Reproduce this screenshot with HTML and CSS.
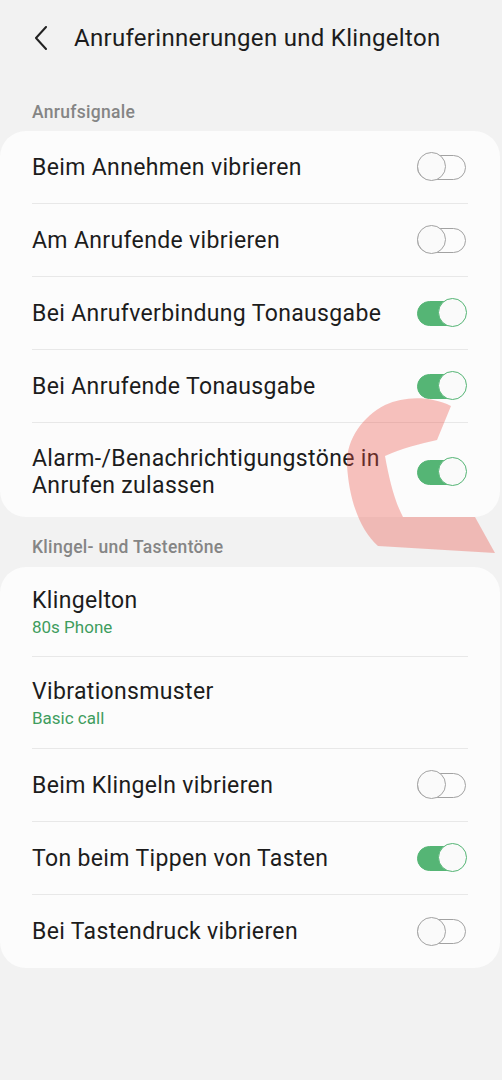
FILE: index.html
```html
<!DOCTYPE html>
<html lang="de">
<head>
    <meta charset="UTF-8">
    <meta name="viewport" content="width=device-width, initial-scale=1.0">
    <title>Anruferinnerungen und Klingelton</title>
    <link rel="stylesheet" href="styles.css">
</head>
<body>

    <div class="topbar">
        <svg class="back" width="14" height="24" viewBox="0 0 14 24">
            <path d="M12 1 L2 12 L12 23" fill="none" stroke="#222" stroke-width="2" stroke-linecap="round" stroke-linejoin="round"/>
        </svg>
        <h1>Anruferinnerungen und Klingelton</h1>
    </div>

    <div class="section-label first">Anrufsignale</div>
    <div class="card">
        <div class="row">
            <span class="title">Beim Annehmen vibrieren</span>
            <span class="switch"></span>
        </div>
        <div class="row">
            <span class="title">Am Anrufende vibrieren</span>
            <span class="switch"></span>
        </div>
        <div class="row">
            <span class="title">Bei Anrufverbindung Tonausgabe</span>
            <span class="switch on"></span>
        </div>
        <div class="row">
            <span class="title">Bei Anrufende Tonausgabe</span>
            <span class="switch on"></span>
        </div>
        <div class="row tall">
            <span class="title">Alarm-/Benachrichtigungstöne in Anrufen zulassen</span>
            <span class="switch on"></span>
        </div>
    </div>

    <div class="section-label">Klingel- und Tastentöne</div>
    <div class="card">
        <div class="row double">
            <div>
                <div class="title">Klingelton</div>
                <div class="sub">80s Phone</div>
            </div>
        </div>
        <div class="row double second">
            <div>
                <div class="title">Vibrationsmuster</div>
                <div class="sub">Basic call</div>
            </div>
        </div>
        <div class="row">
            <span class="title">Beim Klingeln vibrieren</span>
            <span class="switch"></span>
        </div>
        <div class="row">
            <span class="title">Ton beim Tippen von Tasten</span>
            <span class="switch on"></span>
        </div>
        <div class="row">
            <span class="title">Bei Tastendruck vibrieren</span>
            <span class="switch"></span>
        </div>
    </div>

    <!-- Markierung über dem Inhalt -->
    <svg class="scribble" width="502" height="1080" viewBox="0 0 502 1080">
        <path d="M451 406 C430 396 405 396 385 405 C362 417 346 440 347 465 C349 500 360 530 378 546 L495 553 L475 517 L403 517 C394 500 389 478 385 456 C402 448 420 444 437 440 Z"
              fill="rgba(235,80,70,0.35)"/>
    </svg>

</body>
</html>
```

FILE: styles.css
```css
body {
    font-family: Roboto, "Noto Sans", Arial, sans-serif;
    background-color: #f2f2f2;
    margin: 0;
    padding: 0;
    color: #1c1c1c;
    position: relative;
    min-height: 1080px;
}

.topbar {
    height: 76px;
    display: flex;
    align-items: center;
    padding-left: 34px;
}

.back {
    margin-right: 26px;
}

h1 {
    font-size: 24px;
    font-weight: 400;
    letter-spacing: 0.3px;
    margin: 0;
    color: #1c1c1c;
}

.section-label {
    font-size: 17.5px;
    font-weight: 500;
    letter-spacing: 0.3px;
    color: #858585;
    line-height: 24px;
    padding-left: 32px;
    margin: 18px 0 8px;
}

.section-label.first {
    margin: 24px 0 7px;
}

.card {
    background: #fcfcfc;
    border-radius: 26px;
    margin-right: 2px;
}

.row {
    display: flex;
    align-items: center;
    justify-content: space-between;
    height: 73px;
    margin: 0 32px;
    border-bottom: 1px solid #e8e8e8;
    box-sizing: border-box;
}

.row:last-child {
    border-bottom: none;
}

.row .title {
    font-size: 23px;
    letter-spacing: 0.35px;
    line-height: 27px;
}

.row.tall {
    height: 94px;
    padding: 4px 0 0;
}

.row.tall .title {
    width: 360px;
}

.row.double {
    height: 90px;
}

.row.double.second {
    height: 92px;
}

.row.double .title {
    line-height: 30px;
}

.sub {
    font-size: 17px;
    line-height: 22px;
    color: #3f9d5e;
}

.switch {
    width: 49px;
    height: 25px;
    border: 1.5px solid #a2a2a2;
    border-radius: 13px;
    box-sizing: border-box;
    position: relative;
    margin-right: 2px;
    flex-shrink: 0;
}

/* Schalterknopf */
.switch::after {
    content: "";
    position: absolute;
    left: -1.5px;
    top: -3.5px;
    width: 29px;
    height: 29px;
    border-radius: 50%;
    border: 1.5px solid #a2a2a2;
    background: #fafafa;
    box-sizing: border-box;
}

.switch.on {
    background: #55b575;
    border-color: #55b575;
}

.switch.on::after {
    left: auto;
    right: -1.5px;
    border-color: #55b575;
}

.scribble {
    position: absolute;
    top: 0;
    left: 0;
    pointer-events: none;
}
```
